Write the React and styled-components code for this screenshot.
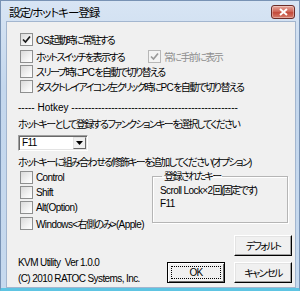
import React from 'react'
import styled, { createGlobalStyle } from 'styled-components'

const GlobalStyle = createGlobalStyle`
  html, body {
    margin: 0;
    padding: 0;
    background: #ffffff;
  }
  body {
    font-family: "Liberation Sans", "Noto Sans CJK JP", sans-serif;
    font-size: 10px;
    letter-spacing: -0.6px;
    color: #000;
    font-feature-settings: "palt";
  }
`

// Japanese runs are set tighter than the Latin ones
const J = styled.span`
  letter-spacing: -1.6px;
`

const Frame = styled.div`
  width: 300px;
  height: 291px;
  box-sizing: border-box;
  display: flex;
  flex-direction: column;
  background: linear-gradient(#d8e5f4, #c4d7ed 30%, #c6d9ee);
  border: 1px solid #7892b4;
  border-bottom: 3px solid #5ec4e2;
  padding: 0 3px 0 5px;
`

const TitleBar = styled.div`
  height: 21px;
  display: flex;
  align-items: center;
  justify-content: space-between;
`

const Title = styled.span`
  font-size: 11.5px;
  letter-spacing: -1px;
  padding-left: 3px;
  padding-top: 1px;
`

const CloseButton = styled.div`
  width: 22px;
  height: 12px;
  margin-right: 1px;
  margin-top: 2px;
  border: 1px solid #6b2b27;
  border-radius: 3px;
  background: linear-gradient(#e6a79c, #d0685a 45%, #c34a3b 55%, #d77e6d);
  display: flex;
  align-items: center;
  justify-content: center;
  box-shadow: inset 0 0 0 1px rgba(255, 255, 255, 0.35);
`

const Client = styled.div`
  flex: 1;
  background: #f0f0f0;
  border: 1px solid #a3b6cf;
  padding: 10px 0 0 11px;
  display: flex;
  flex-direction: column;
`

const CheckRow = styled.div`
  display: flex;
  align-items: center;
  height: 15px;
  margin-top: ${p => p.$mt || 0}px;
  padding-left: 2px;
`

const CheckItem = styled.label`
  display: flex;
  align-items: center;
  gap: 3px;
  width: ${p => (p.$w ? `${p.$w}px` : 'auto')};
  color: ${p => (p.$disabled ? '#8d8d8d' : '#000')};
  white-space: nowrap;
`

const Box = styled.span`
  width: 11px;
  height: 11px;
  border: 1px solid ${p => (p.$disabled ? '#b7b7b7' : '#8e8f8f')};
  background: ${p =>
    p.$disabled ? '#f4f4f4' : 'linear-gradient(135deg, #dadada, #f6f6f6 70%, #ffffff)'};
  display: flex;
  align-items: center;
  justify-content: center;
  flex-shrink: 0;
`

const HotkeyLine = styled.div`
  margin-top: 6px;
  height: 15px;
  line-height: 15px;
  white-space: nowrap;
  letter-spacing: 0;
`

const Label = styled.div`
  height: 14px;
  line-height: 14px;
  margin-top: ${p => p.$mt || 0}px;
  white-space: nowrap;
`

const Combo = styled.div`
  margin-top: 3px;
  width: 70px;
  height: 16px;
  box-sizing: border-box;
  display: flex;
  background: #fff;
  border-top: 1px solid #a0a0a0;
  border-left: 1px solid #a0a0a0;
  border-right: 1px solid #fff;
  border-bottom: 1px solid #fff;
  box-shadow: inset 1px 1px 0 #696969, inset -1px -1px 0 #e3e3e3;
`

const ComboText = styled.span`
  flex: 1;
  padding-left: 3px;
  line-height: 14px;
`

const ComboArrow = styled.span`
  width: 13px;
  margin: 1px 1px 1px 0;
  background: #f0f0f0;
  box-sizing: border-box;
  border-top: 1px solid #e3e3e3;
  border-left: 1px solid #e3e3e3;
  border-right: 1px solid #696969;
  border-bottom: 1px solid #696969;
  display: flex;
  align-items: center;
  justify-content: center;
`

const Lower = styled.div`
  display: flex;
  align-items: flex-start;
`

const Modifiers = styled.div`
  width: 134px;
  display: flex;
  flex-direction: column;
`

const GroupBox = styled.fieldset`
  margin: 0;
  width: 136px;
  height: 53px;
  box-sizing: border-box;
  border: 1px solid #b5b5b5;
  box-shadow: 1px 1px 0 #fff, inset 1px 1px 0 #fff;
  padding: 1px 0 0 7px;
`

const Legend = styled.legend`
  padding: 0 2px;
  margin-left: 2px;
  line-height: 13px;
`

const GroupLine = styled.div`
  height: 13px;
  line-height: 13px;
`

const BottomBar = styled.div`
  display: flex;
  justify-content: space-between;
  align-items: flex-start;
  margin-top: 4px;
  padding-right: 3px;
`

const Version = styled.div`
  line-height: 16px;
  margin-top: 20px;
`

const ButtonColumn = styled.div`
  display: flex;
  flex-direction: column;
  align-items: flex-end;
  gap: 6px;
`

const Buttons = styled.div`
  display: flex;
  gap: 9px;
`

const Button = styled.div`
  width: 58px;
  height: 21px;
  box-sizing: border-box;
  display: flex;
  align-items: center;
  justify-content: center;
  background: #f0f0f0;
  border-top: 1px solid ${p => (p.$default ? '#000' : '#fff')};
  border-left: 1px solid ${p => (p.$default ? '#000' : '#fff')};
  border-right: 1px solid #000;
  border-bottom: 1px solid #000;
  box-shadow: ${p =>
    p.$default
      ? 'inset 1px 1px 0 #fff, inset -1px -1px 0 #696969'
      : 'inset -1px -1px 0 #a0a0a0, inset 1px 1px 0 #e3e3e3'};
`

const FocusRect = styled.span`
  width: 50px;
  height: 13px;
  border: 1px dotted #000;
  display: flex;
  align-items: center;
  justify-content: center;
  box-sizing: border-box;
`

const Check = ({ color }) => (
  <svg width="9" height="9" viewBox="0 0 9 9">
    <path d="M1 4.5 L3.5 7 L8 1.5" fill="none" stroke={color} strokeWidth="1.7" />
  </svg>
)

const CheckBox = ({ checked, disabled, children, w }) => (
  <CheckItem $disabled={disabled} $w={w}>
    <Box $disabled={disabled}>{checked && <Check color={disabled ? '#9a9a9a' : '#1a1a1a'} />}</Box>
    <span>{children}</span>
  </CheckItem>
)

export default function App() {
  return (
    <>
      <GlobalStyle />
      <Frame>
        <TitleBar>
          <Title>設定/ホットキー登録</Title>
          <CloseButton>
            <svg width="9" height="8" viewBox="0 0 9 8">
              <path d="M1 1 L8 7 M8 1 L1 7" stroke="#fff" strokeWidth="2" />
            </svg>
          </CloseButton>
        </TitleBar>
        <Client>
          <CheckRow>
            <CheckBox checked>
              OS<J>起動時に常駐する</J>
            </CheckBox>
          </CheckRow>
          <CheckRow $mt={2}>
            <CheckBox w={128}>
              <J>ホットスイッチを表示する</J>
            </CheckBox>
            <CheckBox checked disabled>
              <J>常に手前に表示</J>
            </CheckBox>
          </CheckRow>
          <CheckRow>
            <CheckBox>
              <J>スリープ時に</J>PC<J>を自動で切り替える</J>
            </CheckBox>
          </CheckRow>
          <CheckRow>
            <CheckBox>
              <J>タスクトレイアイコン左クリック時に</J>PC<J>を自動で切り替える</J>
            </CheckBox>
          </CheckRow>
          <HotkeyLine>----- Hotkey --------------------------------------------------</HotkeyLine>
          <Label $mt={3}>
            <J>ホットキーとして登録するファンクションキーを選択してください</J>
          </Label>
          <Combo>
            <ComboText>F11</ComboText>
            <ComboArrow>
              <svg width="7" height="4" viewBox="0 0 7 4">
                <path d="M0 0 H7 L3.5 4 Z" fill="#000" />
              </svg>
            </ComboArrow>
          </Combo>
          <Label $mt={5}>
            <J>ホットキーに組み合わせる修飾キーを追加してください(オプション)</J>
          </Label>
          <Lower>
            <Modifiers>
              <CheckRow>
                <CheckBox>Control</CheckBox>
              </CheckRow>
              <CheckRow>
                <CheckBox>Shift</CheckBox>
              </CheckRow>
              <CheckRow>
                <CheckBox>Alt(Option)</CheckBox>
              </CheckRow>
              <CheckRow $mt={1}>
                <CheckBox>
                  Windows&lt;<J>右側のみ</J>&gt;(Apple)
                </CheckBox>
              </CheckRow>
            </Modifiers>
            <GroupBox>
              <Legend>
                <J>登録されたキー</J>
              </Legend>
              <GroupLine>
                Scroll Lock×2<J>回(固定です)</J>
              </GroupLine>
              <GroupLine>F11</GroupLine>
            </GroupBox>
          </Lower>
          <BottomBar>
            <Version>
              KVM Utility&nbsp; Ver 1.0.0
              <br />
              (C) 2010 RATOC Systems, Inc.
            </Version>
            <ButtonColumn>
              <Button>
                <J>デフォルト</J>
              </Button>
              <Buttons>
                <Button $default>
                  <FocusRect>OK</FocusRect>
                </Button>
                <Button>
                  <J>キャンセル</J>
                </Button>
              </Buttons>
            </ButtonColumn>
          </BottomBar>
        </Client>
      </Frame>
    </>
  )
}
